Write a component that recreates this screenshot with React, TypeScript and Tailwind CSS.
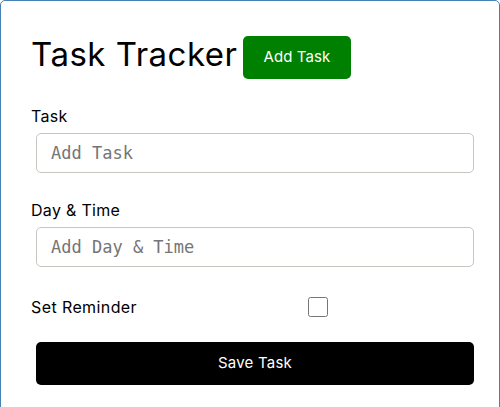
// Task Tracker — header with add button and the add-task form.

const sans = "font-['Inter',_'Noto_Sans',_sans-serif]";
const mono = "font-['DejaVu_Sans_Mono',_monospace]";

function Field({ label, placeholder, className }: { label: string; placeholder: string; className: string }) {
  return (
    <div className={`flex flex-col ${className}`}>
      <label className="text-[16px] leading-[24px] tracking-[0.3px] text-black">{label}</label>
      <input
        type="text"
        placeholder={placeholder}
        className={`${mono} mt-[5px] ml-[5px] h-[40px] w-[438px] rounded-[5px] border border-[#c9c5c1] px-[14px] text-[17px] text-black outline-none placeholder:text-[#757575]`}
      />
    </div>
  );
}

export default function App() {
  return (
    <div className={`${sans} bg-white`}>
      <div className="min-h-[440px] w-[500px] rounded-[5px] border border-[#4682b4] p-[30px]">
        {/* Header */}
        <header className="flex items-center">
          <h1 className="mb-[7px] text-[33px] leading-[40px] font-normal tracking-[0.5px] text-black">Task Tracker</h1>
          <button className="m-[5px] h-[43px] rounded-[5px] bg-[#008000] px-[21px] text-[15px] tracking-[0.1px] text-white">
            Add Task
          </button>
        </header>

        {/* Form */}
        <form className="flex flex-col">
          <Field label="Task" placeholder="Add Task" className="mt-[20px]" />
          <Field label="Day & Time" placeholder="Add Day & Time" className="mt-[25px]" />

          <div className="mt-[28px] flex items-center">
            <label className="w-[277px] text-[16px] leading-[24px] tracking-[0.4px] text-black">Set Reminder</label>
            <input type="checkbox" className="h-[20px] w-[20px]" />
          </div>

          <button
            type="button"
            className="mt-[23px] ml-[5px] block h-[43px] w-[438px] rounded-[5px] bg-black text-[15px] tracking-[0.2px] text-white"
          >
            Save Task
          </button>
        </form>
      </div>
    </div>
  );
}
